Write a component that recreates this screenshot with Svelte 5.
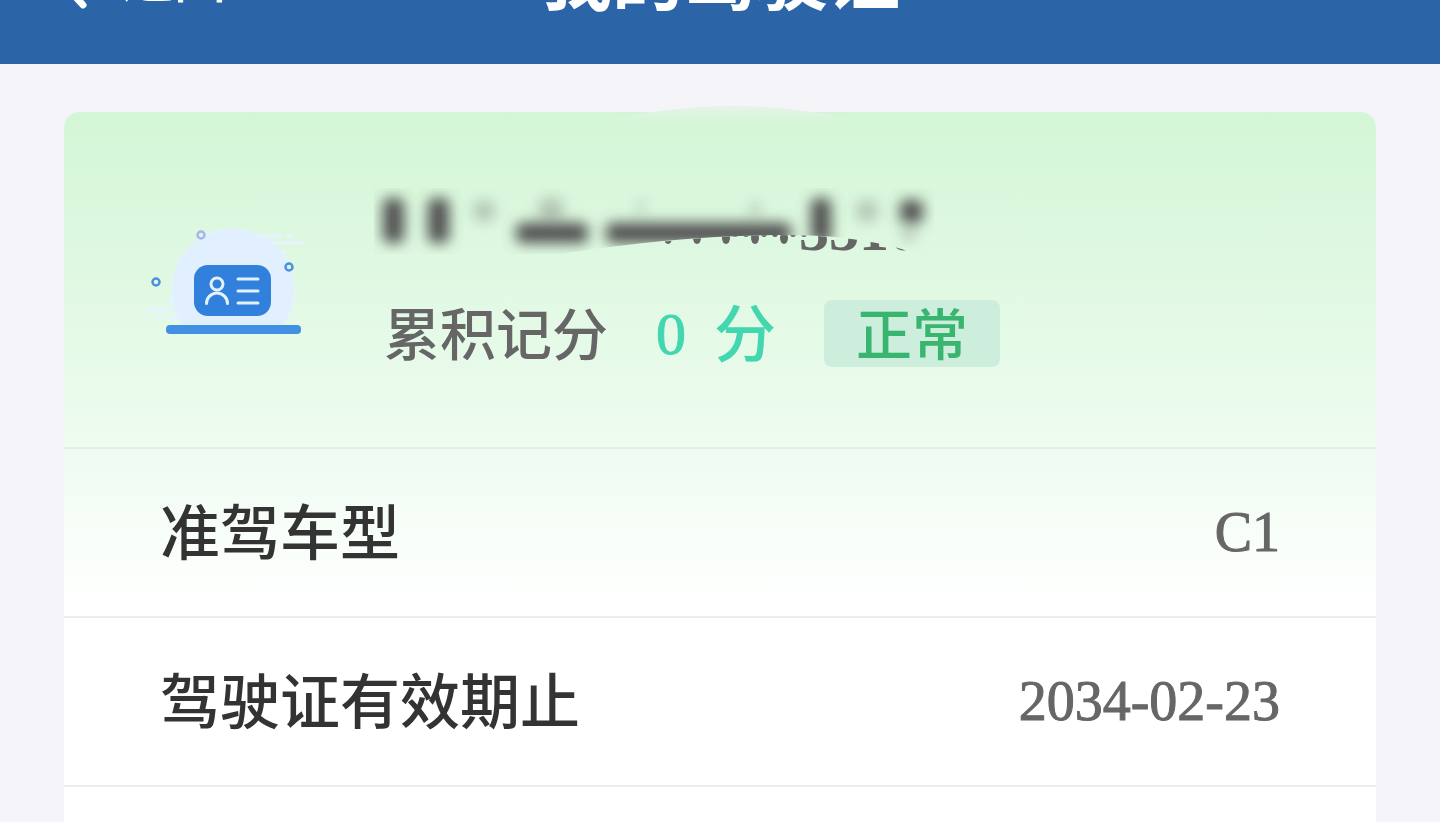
<script>
  const rows = [
    { label: '准驾车型', value: 'C1' },
    { label: '驾驶证有效期止', value: '2034-02-23' }
  ];
  const drops = [294, 323, 352, 381, 410];
</script>

<div class="page">
  <header>
    <button class="back" type="button">
      <svg width="32" height="56" viewBox="0 0 32 56" aria-hidden="true">
        <path d="M25 4 3 28l22 24" fill="none" stroke="#fff" stroke-width="7" stroke-linecap="round" stroke-linejoin="round" />
      </svg>
      <span>返回</span>
    </button>
    <h1>我的驾驶证</h1>
  </header>

  <main>
    <section class="card">
      <svg class="arc" width="260" height="16" viewBox="0 0 260 16" aria-hidden="true">
        <defs>
          <linearGradient id="arcFill" x1="0" y1="0" x2="0" y2="1">
            <stop offset="0" stop-color="#e6f3e8" />
            <stop offset=".4" stop-color="#e0f4e2" />
            <stop offset="1" stop-color="#d4f6d7" />
          </linearGradient>
        </defs>
        <path d="M0 16Q130-16 260 16Z" fill="url(#arcFill)" />
      </svg>

      <div class="summary">
        <svg class="badge" width="160" height="112" viewBox="0 0 160 112" aria-hidden="true">
          <g stroke="#e4f4fa" stroke-width="4" stroke-linecap="round">
            <path d="M112 16h22M142 16h4M124 23h31M130 32h10M22 83h20M2 90h36M12 98h4M23 98h20" />
          </g>
          <path d="M37 105A61 61 0 1 1 137 105Z" fill="#e2efff" stroke="#e2f3fb" stroke-width="2" />
          <rect x="48" y="45" width="77" height="51" rx="14" fill="#3180dc" />
          <g fill="none" stroke="#e2f2ff" stroke-width="3" stroke-linecap="round">
            <circle cx="71" cy="64" r="6" />
            <path d="M60.500 83.500a10.500 10.500 0 0 1 21 0M92 59h20M92 71h20M92 83h20" />
          </g>
          <rect x="20" y="105" width="135" height="9" rx="4" fill="#4290e4" />
          <g fill="none" stroke-width="2.5">
            <circle cx="55" cy="15" r="3.5" stroke="#a5b4f0" />
            <circle cx="143" cy="47" r="3.5" stroke="#4b91dc" />
            <circle cx="10" cy="62" r="3.5" stroke="#4b91dc" />
          </g>
        </svg>

        <div class="details">
          <svg class="number" width="560" height="68" viewBox="0 0 560 68" role="img" aria-label="证件号码">
            <defs>
              <filter id="soft" x="-100%" y="-100%" width="300%" height="300%">
                <feGaussianBlur stdDeviation="7" />
              </filter>
              <clipPath id="above">
                <path d="M0 0H560V68H541Q500 46 400 47Q300 48 186 66H0Z" />
              </clipPath>
              <clipPath id="below">
                <path d="M186 68Q300 48 400 47Q500 47 546 68V80H186Z" />
              </clipPath>
            </defs>
            <g clip-path="url(#below)" fill="#666">
              {#each drops as x}
                <ellipse cx={x} cy="50" rx="4" ry="6" />
                <circle cx={x + 9} cy="46" r="3" />
                <circle cx={x + 20} cy="46" r="3" />
              {/each}
              <text x="425" y="62">3310</text>
            </g>
            <g clip-path="url(#above)">
              <g filter="url(#soft)" fill="#505050">
                <rect x="9" y="10" width="21" height="45" rx="6" />
                <rect x="54" y="10" width="21" height="45" rx="6" />
                <rect x="142" y="35" width="72" height="20" rx="6" />
                <rect x="232" y="35" width="185" height="20" rx="6" />
                <rect x="437" y="10" width="20" height="46" rx="6" />
                <rect x="526" y="12" width="23" height="23" rx="6" />
              </g>
              <g filter="url(#soft)" fill="#666" opacity=".35">
                <circle cx="110" cy="23" r="11" />
                <circle cx="177" cy="22" r="13" />
                <circle cx="493" cy="23" r="11" />
                <circle cx="381" cy="21" r="6" />
                <circle cx="267" cy="19" r="5" />
                <circle cx="535" cy="46" r="7" />
              </g>
            </g>
          </svg>

          <div class="score">
            <span class="caption">累积记分</span>
            <span class="points"><span class="digit">0</span>分</span>
            <span class="status">正常</span>
          </div>
        </div>
      </div>

      <dl>
        {#each rows as row}
          <div class="row">
            <dt>{row.label}</dt>
            <dd>{row.value}</dd>
          </div>
        {/each}
      </dl>
      <div class="rest"></div>
    </section>
  </main>
</div>

<style>
  :global(body) {
    margin: 0;
    background: #f4f4f9;
  }
  .page {
    display: flex;
    flex-direction: column;
    height: 100vh;
    overflow: hidden;
    background: #f4f4f9;
    font-family: 'Liberation Serif', 'Noto Sans CJK SC', serif;
    color: #666;
  }
  header {
    display: grid;
    grid-template-columns: 1fr auto 1fr;
    grid-template-rows: 64px;
    align-items: end;
    flex: none;
    height: 64px;
    overflow: hidden;
    background: #2b65a8;
    color: #fff;
  }
  .back {
    display: flex;
    align-items: end;
    gap: 32px;
    padding: 0 0 55px 58px;
    border: 0;
    background: none;
    color: inherit;
    font: inherit;
    font-size: 52px;
    font-weight: 500;
    line-height: 56px;
  }
  h1 {
    margin: 0;
    padding-bottom: 48px;
    font-size: 72px;
    line-height: 72px;
    font-weight: 700;
  }
  main {
    display: flex;
    flex: 1;
    padding: 48px 64px 0;
  }
  .card {
    position: relative;
    display: flex;
    flex-direction: column;
    flex: 1;
    border-radius: 16px 16px 0 0;
    background: linear-gradient(#d3f6d6 0, #ebfbed 300px, #fff 496px) #fff;
  }
  .arc {
    position: absolute;
    top: -6px;
    left: calc(50% - 117px);
  }
  .summary {
    display: flex;
    align-items: flex-start;
    gap: 68px;
    padding: 76px 80px 80px 82px;
    border-bottom: 2px solid #e2efe4;
  }
  .badge {
    flex: none;
    margin-top: 32px;
    overflow: visible;
  }
  .details {
    display: flex;
    flex-direction: column;
    gap: 44px;
  }
  .number {
    display: block;
    overflow: visible;
  }
  .number text {
    font-size: 60px;
    font-weight: 700;
  }
  .score {
    display: flex;
    align-items: flex-start;
    gap: 48px;
    height: 67px;
    padding-left: 10px;
    line-height: 72px;
    white-space: nowrap;
  }
  .caption,
  .status {
    font-size: 56px;
    font-weight: 500;
  }
  .points {
    display: flex;
    align-items: flex-start;
    gap: 28px;
    color: #42d7ae;
    font-size: 62px;
    font-weight: 500;
  }
  .digit {
    font-size: 60px;
    line-height: 68px;
    -webkit-text-stroke: 1px;
  }
  .status {
    height: 67px;
    padding: 0 32px;
    border-radius: 8px;
    background: #cdeedd;
    color: #38b56f;
  }
  dl {
    margin: 0;
  }
  .row {
    display: flex;
    align-items: flex-start;
    justify-content: space-between;
    padding: 50px 96px 45px;
    border-bottom: 2px solid #ededed;
    line-height: 72px;
  }
  dt {
    color: #333;
    font-size: 60px;
    font-weight: 500;
  }
  dd {
    margin: 0;
    font-size: 56px;
    line-height: 66px;
    -webkit-text-stroke: 1px;
  }
  .rest {
    flex: 1;
    background: #fff;
  }
</style>
